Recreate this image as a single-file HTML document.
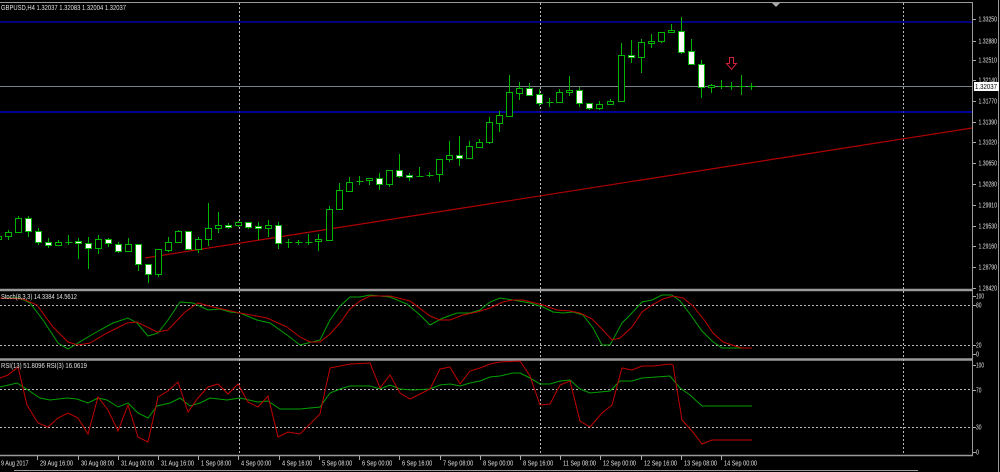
<!DOCTYPE html>
<html><head><meta charset="utf-8"><style>
html,body{margin:0;padding:0;background:#000;overflow:hidden}
svg{display:block}
text{font-family:"Liberation Sans",sans-serif;font-size:7px;fill:#e0e0e0}
</style></head><body>
<svg id="s" width="1000" height="472" xmlns="http://www.w3.org/2000/svg">
<rect width="1000" height="472" fill="#000"/>
<g stroke="#9a9a9a" fill="none">
<line x1="0" y1="2.5" x2="973" y2="2.5" stroke-width="1"/>
<line x1="972.5" y1="2" x2="972.5" y2="456" stroke-width="1"/>
<line x1="0" y1="290" x2="973" y2="290" stroke-width="2.5"/>
<line x1="0" y1="359.5" x2="973" y2="359.5" stroke-width="2.5"/>
<line x1="0" y1="455.5" x2="973" y2="455.5" stroke-width="1.5"/>
<line x1="14" y1="470.5" x2="918" y2="470.5" stroke-width="1"/>
<line x1="998.5" y1="0" x2="998.5" y2="472" stroke-width="1"/>
</g>
<polygon points="772,3 780,3 776,7" fill="#aaa"/>
<g stroke="#bbb" stroke-dasharray="2,2" stroke-width="1">
<line x1="239.5" y1="3" x2="239.5" y2="455"/>
<line x1="540.5" y1="3" x2="540.5" y2="455"/>
<line x1="903.5" y1="3" x2="903.5" y2="455"/>
<line x1="0" y1="305.5" x2="972" y2="305.5"/>
<line x1="0" y1="345.5" x2="972" y2="345.5"/>
<line x1="0" y1="389.5" x2="972" y2="389.5"/>
<line x1="0" y1="427.5" x2="972" y2="427.5"/>
</g>
<line x1="0" y1="22" x2="972" y2="22" stroke="#0000c8" stroke-width="1.3"/>
<line x1="0" y1="112" x2="972" y2="112" stroke="#0000c8" stroke-width="1.6"/>
<line x1="0" y1="86.5" x2="972" y2="86.5" stroke="#778088" stroke-width="1"/>
<line x1="145" y1="258" x2="972" y2="128" stroke="#b00000" stroke-width="1.2"/>
<g id="candles"></g>
<path d="M729.5,57.5 h4 v6 h3 l-5,6 l-5,-6 h3 z" fill="none" stroke="#d0203a" stroke-width="1"/>
<polyline fill="none" stroke="#00a000" stroke-width="1" points="0,298 20,298 30,303 43,320 58,343 68,349 88,337 100,330 113,323 128,318 137,323 148,336 158,333 168,320 180,302 193,303 208,310 220,309 230,312 240,313 257,320 270,323 287,335 300,345 320,340 330,320 340,306 350,297 360,297 370,295 390,297 407,304 420,315 430,325 443,318 457,313 470,313 480,310 490,302 500,298 513,300 530,303 543,307 553,312 563,313 573,312 583,315 593,328 602,345 610,345 622,323 630,315 642,302 652,300 662,295 672,295 680,301 690,314 702,331 712,341 722,348 752,348"/>
<polyline fill="none" stroke="#c00000" stroke-width="1" points="0,298 23,299 37,305 53,327 68,342 78,345 90,343 107,333 127,323 137,322 157,332 168,330 185,312 198,303 213,307 240,313 267,318 287,327 300,337 310,342 320,342 330,334 340,323 350,309 360,301 370,296 390,296 410,301 430,316 440,320 450,320 463,315 477,312 490,308 503,302 513,300 523,300 543,305 557,310 570,311 580,313 592,319 602,329 612,340 620,338 632,327 642,312 652,305 663,299 673,296 683,298 693,306 705,321 713,333 723,342 735,346 742,348 752,348"/>
<polyline fill="none" stroke="#00a000" stroke-width="1" points="0,387 17,383 25,388 40,398 50,400 67,398 77,399 88,403 98,398 107,400 118,407 128,403 138,413 148,418 157,406 170,403 180,398 190,406 200,403 210,398 227,400 240,398 258,402 268,401 280,409 300,409 320,407 330,393 340,389 350,386 370,386 380,389 390,385 400,389 413,390 430,389 440,385 450,384 460,386 470,383 480,381 490,377 500,376 513,373 520,373 530,378 540,384 550,384 560,381 570,380 580,389 590,393 600,392 610,391 620,381 632,381 642,378 670,376 680,388 690,395 702,406 752,406"/>
<polyline fill="none" stroke="#c00000" stroke-width="1" points="0,378 8,375 18,367 27,405 38,423 48,427 58,418 68,413 78,418 88,434 98,397 108,410 118,431 128,405 138,437 148,442 158,397 168,391 178,382 188,412 198,398 208,387 218,384 228,394 238,384 248,402 258,407 268,396 278,437 288,432 300,434 320,414 330,368 340,366 350,364 370,363 380,388 390,375 400,393 410,399 430,389 440,369 450,367 460,384 470,371 480,368 490,364 500,362 520,361 530,376 540,405 550,404 560,385 570,381 580,421 590,427 602,413 612,405 622,368 632,370 642,366 653,366 670,364 673,365 682,420 692,431 702,444 712,440 723,440 752,440"/>
<text x="1" y="10" textLength="125" lengthAdjust="spacingAndGlyphs">GBPUSD,H4  1.32037 1.32083 1.32004 1.32037</text>
<text x="1" y="299" textLength="76" lengthAdjust="spacingAndGlyphs">Stoch(8,3,3) 14.3384 14.5612</text>
<text x="1" y="368" textLength="86" lengthAdjust="spacingAndGlyphs">RSI(13) 51.8096  RSI(3) 16.0619</text>
<g id="axis"></g>
<rect x="974" y="82" width="25" height="9" fill="#fff"/>
<text x="975" y="89" style="fill:#000" textLength="22" lengthAdjust="spacingAndGlyphs">1.32037</text>
</svg>
<script>
var NS="http://www.w3.org/2000/svg",s=document.getElementById('s');
function el(t,a,p){var e=document.createElementNS(NS,t);for(var k in a)e.setAttribute(k,a[k]);(p||s).appendChild(e);return e;}
function tx(x,y,str,w,p){var t=el('text',{x:x,y:y,textLength:w,lengthAdjust:'spacingAndGlyphs'},p);t.textContent=str;return t;}
var C=[[-2,235,236,239,241,'h'],[8,230,232,236,240,'h'],[18,216,218,232,232,'h'],[28,216,218,231,237,'w'],[38,228,231,242,245,'w'],[48,238,242,245,248,'w'],[58,240,242,245,246,'h'],[68,235,242,242,245,'d'],[78,238,241,243,259,'w'],[88,237,243,248,269,'w'],[98,235,239,248,254,'h'],[108,238,239,243,247,'w'],[118,242,244,251,253,'w'],[128,238,244,251,252,'h'],[138,244,244,264,271,'w'],[148,264,264,274,283,'w'],[158,249,249,274,277,'h'],[168,237,242,250,252,'h'],[178,230,231,242,242,'h'],[188,231,231,249,250,'w'],[198,237,239,249,253,'h'],[208,203,228,239,246,'h'],[218,212,225,228,233,'h'],[228,223,225,227,229,'w'],[238,221,222,225,227,'h'],[248,222,222,227,229,'w'],[258,222,226,228,240,'w'],[268,220,225,228,237,'h'],[278,222,225,243,249,'w'],[288,239,242,242,248,'d'],[298,240,242,242,245,'d'],[308,234,242,242,245,'d'],[318,234,239,241,251,'h'],[329,206,209,240,240,'h'],[339,183,190,209,209,'h'],[349,177,182,191,191,'h'],[359,176,181,181,185,'d'],[369,178,178,180,185,'h'],[379,173,178,184,190,'w'],[389,170,170,184,187,'h'],[399,154,170,176,178,'w'],[409,173,175,177,181,'w'],[419,167,176,176,177,'d'],[429,172,175,175,177,'d'],[439,159,159,174,182,'h'],[449,141,155,159,162,'h'],[459,136,155,158,166,'w'],[469,141,146,158,159,'h'],[479,139,142,147,148,'h'],[489,117,122,142,144,'h'],[499,111,115,123,132,'h'],[509,75,92,116,116,'h'],[519,82,88,93,100,'h'],[529,83,88,95,95,'w'],[539,89,94,103,106,'w'],[549,98,102,102,107,'d'],[559,89,92,102,103,'h'],[569,76,90,92,96,'h'],[579,87,90,103,107,'w'],[589,103,103,108,110,'w'],[599,101,104,108,110,'h'],[610,99,101,104,105,'h'],[621,43,55,101,102,'h'],[631,40,55,57,63,'w'],[641,39,42,57,73,'h'],[651,34,41,43,48,'h'],[661,32,32,41,43,'h'],[671,24,30,32,32,'h'],[681,17,31,52,54,'w'],[691,39,51,64,64,'w'],[701,60,64,87,98,'w'],[711,84,85,87,93,'h'],[721,80,86,86,89,'d'],[731,82,86,86,90,'d'],[741,75,86,86,95,'d'],[751,83,86,86,90,'d']];
var g=document.getElementById('candles'),G='#00b400';
C.forEach(function(c){var x=c[0]+0.5;
el('line',{x1:x,y1:c[1],x2:x,y2:c[4],stroke:G,'stroke-width':1},g);
if(c[5]=='d'){el('line',{x1:x-3,y1:c[2]+.5,x2:x+4,y2:c[2]+.5,stroke:G,'stroke-width':1},g);}
else{var h=Math.max(c[3]-c[2],2);el('rect',{x:x-3,y:c[2]+.5,width:6,height:h,fill:c[5]=='w'?'#fff':'#000',stroke:G,'stroke-width':1},g);}
});
var a=document.getElementById('axis');
var P=[['1.33250',19],['1.32880',41],['1.32510',60],['1.32140',80],['1.31770',101],['1.31390',122],['1.31020',142],['1.30650',163],['1.30280',184],['1.29910',205],['1.29530',226],['1.29160',246],['1.28790',267],['1.28420',288]];
P.forEach(function(p){el('line',{x1:973,y1:p[1]+.5,x2:976,y2:p[1]+.5,stroke:'#aaa'},a);tx(978.5,p[1]+2.5,p[0],18.5,a);});
[['100',296,8],['80',305,5.5],['20',345,5.5],['0',354,3],['100',365,8],['70',390,5.5],['30',427,5.5],['0',452,3]].forEach(function(p){el('line',{x1:973,y1:p[1]+.5,x2:976,y2:p[1]+.5,stroke:'#aaa'},a);tx(976,p[1]+2.5,p[0],p[2],a);});
var T=[['9 Aug 2017',-2,0],['29 Aug 16:00',37,1],['30 Aug 08:00',78,1],['31 Aug 00:00',118,1],['31 Aug 16:00',158,1],['1 Sep 08:00',198,1],['4 Sep 00:00',238,1],['4 Sep 16:00',279,1],['5 Sep 08:00',319,1],['6 Sep 00:00',359,1],['6 Sep 16:00',399,1],['7 Sep 08:00',440,1],['8 Sep 00:00',480,1],['8 Sep 16:00',520,1],['11 Sep 08:00',560,1],['12 Sep 00:00',600,1],['12 Sep 16:00',641,1],['13 Sep 08:00',681,1],['14 Sep 00:00',721,1]];
T.forEach(function(p){if(p[2])el('line',{x1:p[1]+.5,y1:456,x2:p[1]+.5,y2:460,stroke:'#aaa'},a);tx(p[1]+3,p[1]<0?465.5:465.5,p[0],p[0].length*2.75,a);});
</script>
</body></html>
